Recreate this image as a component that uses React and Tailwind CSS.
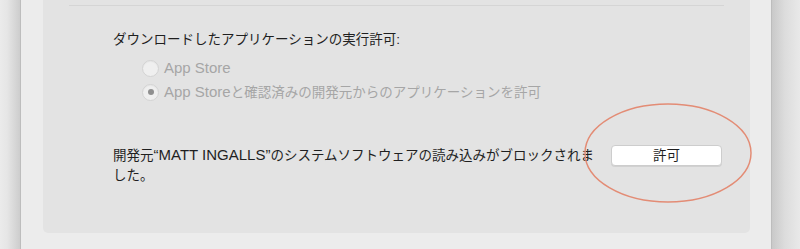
import React from 'react';

const font = { fontFamily: '"Liberation Sans", "Noto Sans CJK JP", sans-serif' };

const Latin = ({ children }) => <span className="text-[15px]">{children}</span>;

const Radio = ({ checked, children }) => (
  <div className="flex h-[20px] items-center gap-[5px]">
    <span className="flex h-[17px] w-[17px] items-center justify-center rounded-full border border-[#d3d3d3] bg-[#efefef] shadow-[inset_0_1px_1px_rgba(0,0,0,0.04)]">
      {checked && <span className="h-[6px] w-[6px] rounded-full bg-[#8f8f8f]" />}
    </span>
    <span className="text-[#a6a6a6]">{children}</span>
  </div>
);

const App = () => (
  <div className="flex h-[249px] w-[800px] overflow-hidden text-[13.5px] leading-[20px]" style={font}>
    <div className="w-[21px] border-r border-[#bdbdbd] bg-[linear-gradient(to_right,#ebebeb_0%,#e6e6e6_35%,#cdcdcd_100%)]" />

    <div className="flex w-[750px] flex-col bg-[#ececec] pb-[16px] pl-[22px] pr-[21px]">
      <div className="relative flex-1 rounded-b-[5px] bg-[#e3e3e3] px-[26px] pt-[5px]">
        <div className="h-px bg-[#d5d5d5]" />

        <div className="mt-[24px] pl-[44px]">
          <p className="text-[#1f1f1f]">ダウンロードしたアプリケーションの実行許可:</p>
          <div className="mt-[8px] flex flex-col gap-[4px] pl-[29px]">
            <Radio><Latin>App Store</Latin></Radio>
            <Radio checked><Latin>App Store</Latin>と確認済みの開発元からのアプリケーションを許可</Radio>
          </div>

          <div className="mt-[43px] flex items-start gap-[12px]">
            <p className="w-[486px] text-[#1f1f1f]">
              開発元<Latin>“MATT INGALLS”</Latin>のシステムソフトウェアの読み込みがブロックされました。
            </p>
            <button className="h-[21px] w-[111px] rounded-[4px] border border-[#cdcdcd] bg-white text-[13.5px] leading-[19px] text-[#1f1f1f] shadow-[0_1px_0_rgba(0,0,0,0.08)]">
              許可
            </button>
          </div>
        </div>

        <svg className="pointer-events-none absolute left-[539px] top-[102px]" width="172" height="102" viewBox="0 0 172 102">
          <ellipse cx="86" cy="51" rx="83" ry="49" fill="none" stroke="#e38c75" strokeWidth="1.5" />
        </svg>
      </div>
    </div>

    <div className="flex-1 border-l border-[#bdbdbd] bg-[linear-gradient(to_right,#c9c9c9_0%,#dcdcdc_45%,#e9e9e9_100%)]" />
  </div>
);

export default App;
